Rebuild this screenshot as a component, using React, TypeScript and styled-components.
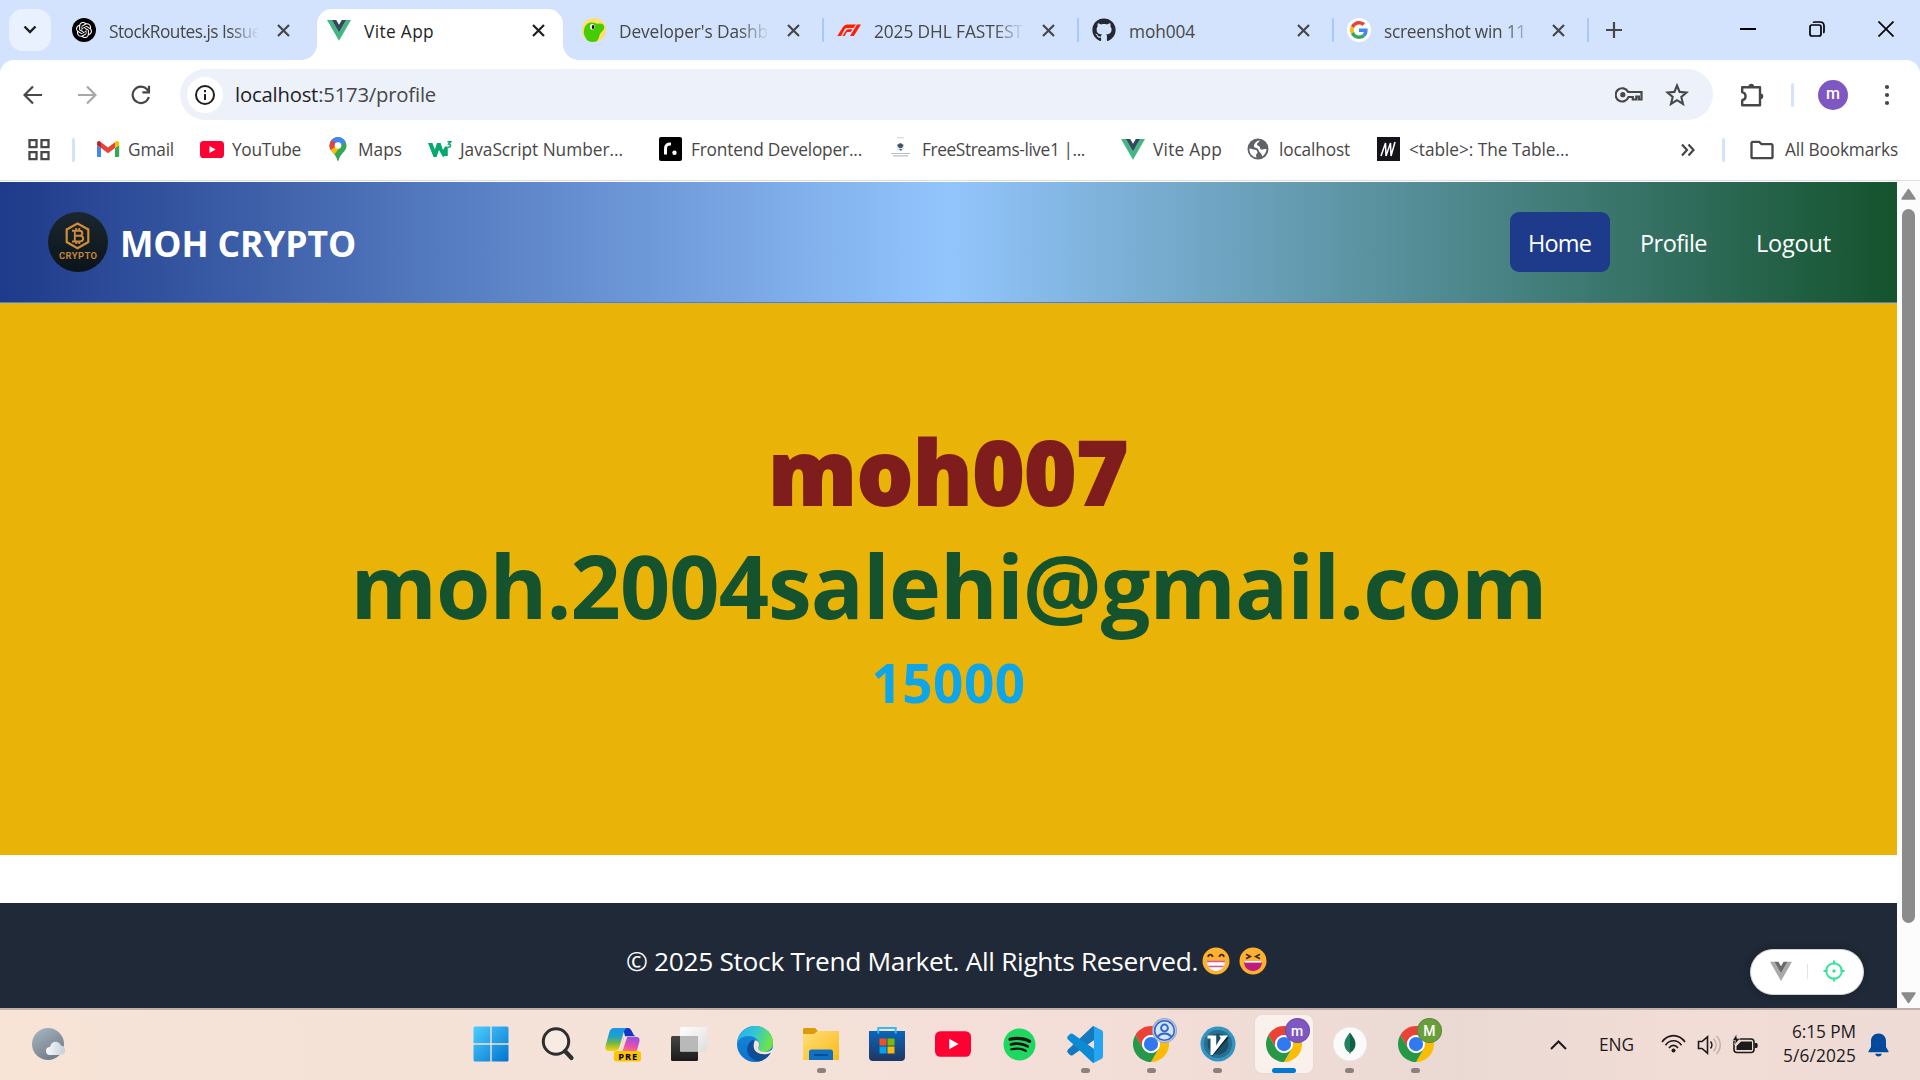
import React, { useLayoutEffect, useRef, useState } from "react";
import styled, { createGlobalStyle } from "styled-components";
import { SiOpenai } from "react-icons/si";
import { FaGithub, FaSpotify } from "react-icons/fa";
import { MdOutlineFolder } from "react-icons/md";

const GlobalStyle = createGlobalStyle`
  * { box-sizing: border-box; }
  html, body { margin: 0; padding: 0; overflow: hidden; }
  body { font-family: "Open Sans", "Noto Sans", sans-serif; background: #fff; }
  svg { display: block; flex: none; }
`;

/* ---------- text ---------- */

const LabelBox = styled.span<{ $w: number; $size: number; $color: string; $weight: number; $shift: number; $bolder: number }>`
  display: block;
  flex: none;
  width: ${(p) => p.$w}px;
  font-size: ${(p) => p.$size}px;
  font-weight: ${(p) => p.$weight};
  color: ${(p) => p.$color};
  -webkit-text-stroke: ${(p) => p.$bolder}px ${(p) => p.$color};
  line-height: 1.3;
  white-space: pre;
  margin-top: ${(p) => p.$shift}px;
`;

interface LabelProps {
  children: string;
  w: number;
  size: number;
  color?: string;
  weight?: number;
  shift?: number;
  bolder?: number;
  rich?: React.ReactNode;
}

/* One line of text whose tracking is adjusted to fill its given width. */
function Label({ children, w, size, color = "#474747", weight = 400, shift = 0, bolder = 0, rich }: LabelProps) {
  const ref = useRef<HTMLSpanElement>(null);
  const [spacing, setSpacing] = useState(0);
  useLayoutEffect(() => {
    const natural = ref.current!.getBoundingClientRect().width;
    setSpacing((w - natural) / children.length);
  }, []);
  return (
    <LabelBox $w={w} $size={size} $color={color} $weight={weight} $shift={shift} $bolder={bolder}>
      <span ref={ref} style={{ letterSpacing: spacing }}>{rich ?? children}</span>
    </LabelBox>
  );
}

/* ---------- shell ---------- */

const Screen = styled.div`
  width: 1920px;
  height: 1080px;
  display: flex;
  flex-direction: column;
  overflow: hidden;
  background: #fff;
`;

/* ---------- tab strip ---------- */

const TabStrip = styled.div`
  height: 60px;
  background: #d3e3fd;
  display: flex;
  align-items: flex-start;
  padding-left: 9px;
`;

const TabSearch = styled.div`
  width: 42px;
  height: 42px;
  margin-top: 9px;
  margin-right: 6px;
  border-radius: 14px;
  background: #e9f1fe;
  display: grid;
  place-items: center;
`;

const TabBox = styled.div<{ $active?: boolean; $sep?: boolean }>`
  width: 255px;
  height: 60px;
  display: flex;
  align-items: center;
  position: relative;
  padding-left: 15px;
  &::before {
    content: "";
    display: ${(p) => (p.$active || p.$sep ? "block" : "none")};
    position: absolute;
    left: ${(p) => (p.$active ? 5 : 0)}px;
    top: ${(p) => (p.$active ? 9 : 18)}px;
    width: ${(p) => (p.$active ? 246 : 2)}px;
    height: ${(p) => (p.$active ? 51 : 24)}px;
    border-radius: ${(p) => (p.$active ? "15px 15px 0 0" : "1px")};
    background: ${(p) => (p.$active ? "#fff" : "#a8c7fa")};
  }
  &::after {
    content: "";
    display: ${(p) => (p.$active ? "block" : "none")};
    position: absolute;
    left: -10px;
    width: 276px;
    bottom: 0;
    height: 15px;
    background:
      radial-gradient(circle at 0 0, transparent 14.5px, #fff 15px) left / 15px 15px no-repeat,
      radial-gradient(circle at 100% 0, transparent 14.5px, #fff 15px) right / 15px 15px no-repeat;
  }
  > * { z-index: 1; }
`;

const Favicon = styled.span`
  width: 24px;
  height: 24px;
  display: grid;
  place-items: center;
  flex: none;
`;

const TabTitle = styled.div<{ $fade?: boolean }>`
  width: 153px;
  margin-left: 13px;
  overflow: hidden;
  -webkit-mask-image: ${(p) => (p.$fade ? "linear-gradient(90deg, #000 120px, transparent 150px)" : "none")};
`;

const TabClose = styled.span`
  width: 24px;
  display: grid;
  place-items: center;
  margin-left: 9px;
`;

const NewTab = styled.div`
  height: 60px;
  width: 49px;
  display: grid;
  place-items: center;
`;

const EndSeparator = styled.div`
  width: 2px;
  height: 24px;
  margin-top: 18px;
  background: #a8c7fa;
`;

const WindowButtons = styled.div`
  margin-left: auto;
  height: 58px;
  display: flex;
  align-items: center;
  > span {
    width: 69px;
    display: grid;
    place-items: center;
  }
`;

/* ---------- toolbar ---------- */

const ToolbarWrap = styled.div`
  height: 60px;
  background: #d3e3fd;
`;

const Toolbar = styled.div`
  height: 60px;
  background: #fff;
  border-radius: 14px 14px 0 0;
  display: flex;
  align-items: center;
  padding: 9px 0 0 6px;
`;

const IconSlot = styled.span<{ $w: number }>`
  width: ${(p) => p.$w}px;
  display: grid;
  place-items: center;
  flex: none;
`;

const Omnibox = styled.div`
  flex: none;
  margin-left: 12px;
  width: 1533px;
  height: 51px;
  border-radius: 26px;
  background: #ecf1fa;
  display: flex;
  align-items: center;
  padding: 0 12px 0 7px;
`;

const SiteInfo = styled.span`
  width: 36px;
  height: 36px;
  border-radius: 50%;
  background: #fff;
  display: grid;
  place-items: center;
  margin-right: 12px;
`;

const Host = styled.span`
  color: #1f1f1f;
`;

const Spacer = styled.span`
  flex: 1;
`;

const BarSeparator = styled.span<{ $l?: number; $r?: number }>`
  width: 3px;
  height: 24px;
  border-radius: 2px;
  background: #d3e3fd;
  margin-left: ${(p) => p.$l ?? 0}px;
  margin-right: ${(p) => p.$r ?? 0}px;
  flex: none;
`;

const Avatar = styled.span`
  flex: none;
  width: 30px;
  height: 30px;
  border-radius: 50%;
  background: #7e57c2;
  color: #fff;
  font: 500 16px/28px Roboto, sans-serif;
  text-align: center;
  margin-right: 36px;
`;

/* ---------- bookmarks ---------- */

const Bookmarks = styled.div`
  height: 62px;
  background: #fff;
  border-bottom: 1px solid #fff;
  box-shadow: inset 0 -1px 0 #dcdde0;
  display: flex;
  align-items: center;
  padding: 0 22px 2px 27px;
`;

const BookmarkItem = styled.div<{ $slot: number }>`
  width: ${(p) => p.$slot}px;
  display: flex;
  align-items: center;
  gap: 8px;
  flex: none;
`;

const BarGap = styled.span`
  width: 9px;
`;

/* ---------- web page ---------- */

const Viewport = styled.div`
  height: 826px;
  display: flex;
`;

const Page = styled.div`
  width: 1897px;
  display: flex;
  flex-direction: column;
`;

const Header = styled.header`
  height: 121px;
  border-bottom: 1px solid #3b82f6;
  background: linear-gradient(90deg, #1e3a8a, #93c5fd, #14532d);
  display: flex;
  align-items: center;
  padding: 0 47px 0 48px;
`;

const Brand = styled.div`
  display: flex;
  align-items: center;
  gap: 12px;
  flex: 1;
`;

const Nav = styled.nav`
  display: flex;
  gap: 12px;
`;

const NavLink = styled.a<{ $active?: boolean }>`
  height: 60px;
  padding: 0 19px 0 18px;
  border-radius: 9px;
  display: flex;
  align-items: center;
  background: ${(p) => (p.$active ? "#1e3a8a" : "transparent")};
`;

const Profile = styled.main`
  height: 552px;
  background: #eab308;
  display: flex;
  flex-direction: column;
  align-items: center;
  padding-top: 111px;
`;

const ProfileLine = styled.div<{ $h: number }>`
  height: ${(p) => p.$h}px;
  display: flex;
  align-items: center;
`;

const Footer = styled.footer`
  margin-top: 48px;
  height: 105px;
  background: #1f2937;
  display: flex;
  align-items: center;
  padding: 11px 0 0 626px;
  position: relative;
`;

const Emoji = styled.span<{ $gap: number }>`
  margin-left: ${(p) => p.$gap}px;
`;

const DevPill = styled.div`
  position: absolute;
  left: 1750px;
  top: 46px;
  width: 114px;
  height: 46px;
  border-radius: 23px;
  background: #fff;
  border: 1px solid #cfd2d6;
  box-shadow: 0 0 8px rgba(0, 0, 0, 0.2);
  display: flex;
  align-items: center;
  justify-content: space-between;
  padding: 0 18px 2px 19px;
`;

const PillDivider = styled.span`
  width: 1px;
  height: 15px;
  background: #e4e4e4;
`;

const Scrollbar = styled.div`
  width: 23px;
  background: #fcfcfc;
  display: flex;
  flex-direction: column;
  align-items: center;
  justify-content: space-between;
  padding: 6px 0 4px;
`;

const Thumb = styled.span`
  width: 13px;
  height: 714px;
  margin-bottom: 60px;
  border-radius: 7px;
  background: #8b8b8b;
`;

/* ---------- taskbar ---------- */

const Taskbar = styled.div`
  height: 72px;
  border-top: 2px solid #bfb0a8;
  background: linear-gradient(90deg, #f7e4d7 0%, #f4e1d8 40%, #f3ded7 60%, #ead9d3 76%, #f2ddd6 88%, #eedbd5 100%);
  display: flex;
  padding-left: 30px;
`;

const Weather = styled.div`
  width: 427.500px;
  padding-top: 17px;
`;

const TaskItem = styled.div<{ $active?: boolean }>`
  width: 58px;
  height: 58px;
  margin: 5px 4.05px 0;
  border-radius: 7px;
  background: ${(p) => (p.$active ? "#faf0ec" : "transparent")};
  box-shadow: ${(p) => (p.$active ? "0 0 0 1px #ead8d1" : "none")};
  display: grid;
  place-items: center;
  position: relative;
  flex: none;
`;

const Running = styled.span<{ $active?: boolean }>`
  position: absolute;
  bottom: 0;
  left: ${(p) => (p.$active ? 17 : 24.5)}px;
  width: ${(p) => (p.$active ? 24 : 9)}px;
  height: 5px;
  border-radius: 3px;
  background: ${(p) => (p.$active ? "#0078d4" : "#8b827d")};
`;

const Badge = styled.span<{ $bg: string }>`
  position: absolute;
  left: 30px;
  top: 3px;
  width: 25px;
  height: 25px;
  border-radius: 50%;
  background: ${(p) => p.$bg};
  box-shadow: inset 0 0 0 1px rgba(60, 50, 80, 0.25);
  color: #fff;
  font: 500 14px/24px Roboto, sans-serif;
  text-align: center;
  display: grid;
  place-items: center;
`;

const Tray = styled.div`
  margin-left: auto;
  display: flex;
  align-items: center;
  padding: 0 31px 0 0;
`;

const TraySlot = styled.span<{ $ml: number; $mt?: number }>`
  margin-left: ${(p) => p.$ml}px;
  margin-top: ${(p) => p.$mt ?? 0}px;
`;

const Clock = styled.div`
  display: flex;
  flex-direction: column;
  align-items: flex-end;
  margin: -2px 0 0 25px;
  gap: 1.500px;
`;

/* ---------- icons ---------- */

const CloseX = ({ c = "#474747", s = 13 }: { c?: string; s?: number }) => (
  <svg width={s} height={s} viewBox="0 0 13 13" stroke={c} strokeWidth="2.2">
    <path d="M1 1L12 12M12 1L1 12" />
  </svg>
);

const Vue = ({ s = 24, a = "#41b883", b = "#35495e" }: { s?: number; a?: string; b?: string }) => (
  <svg width={s} height={s} viewBox="0 0 24 24">
    <path fill={a} d="M0 2h4.8L12 14.4 19.2 2H24L12 22.8z" />
    <path fill={b} d="M4.8 2h4.4L12 6.8 14.8 2h4.4L12 14.4z" />
  </svg>
);

const OpenAi = () => (
  <svg width="24" height="24" viewBox="0 0 24 24">
    <circle cx="12" cy="12" r="12" fill="#000" />
    <g transform="translate(4 4)"><SiOpenai size={16} color="#fff" /></g>
  </svg>
);

const Duck = () => (
  <svg width="24" height="24" viewBox="0 0 24 24">
    <circle cx="12" cy="12" r="12" fill="#ffe066" />
    <path fill="#46cc02" d="M2.500 10C3.500 6 7 4 11 4.500c2 .2 3 1.200 4.500 1.200C19 5 22 6 22.300 9c.2 3-2.500 4.500-4 6.500-1.500 2.500-1 5.500-3.500 7.500-2 1.200-6 1.200-8.500 0C4 21.500 3 19 2 16c-.5-2-.2-4 .5-6z" />
    <ellipse cx="10.300" cy="8.800" rx="2.300" ry="2.800" fill="#fff" />
    <ellipse cx="11" cy="8.900" rx="1.300" ry="2" fill="#111" />
  </svg>
);

const FOne = () => (
  <svg width="24" height="24" viewBox="0 0 24 24" fill="#ff1e00">
    <path d="M.3 18L5 10.500C6.800 7.600 8 6.500 11.500 6.500H19L16.300 10H11c-2 0-2.700.4-3.600 1.800L4 18z" />
    <path d="M5.500 18l3.200-5c.8-1.300 1.500-1.800 3-1.800h4L13.500 14H11c-.9 0-1.200.2-1.700 1L7.600 18z" />
    <path d="M13 18L20 6.500h4L16.800 18z" />
  </svg>
);

const GoogleG = () => (
  <svg width="24" height="24" viewBox="0 0 24 24">
    <circle cx="12" cy="12" r="12" fill="#fff" />
    <g transform="translate(3 3) scale(.375)">
      <path fill="#EA4335" d="M24 9.500c3.540 0 6.710 1.220 9.210 3.600l6.850-6.850C35.900 2.380 30.470 0 24 0 14.620 0 6.510 5.380 2.560 13.220l7.980 6.190C12.430 13.720 17.740 9.500 24 9.500z" />
      <path fill="#4285F4" d="M46.980 24.550c0-1.570-.15-3.090-.38-4.550H24v9.020h12.940c-.58 2.960-2.260 5.480-4.780 7.180l7.730 6c4.510-4.180 7.090-10.360 7.090-17.650z" />
      <path fill="#FBBC05" d="M10.530 28.590c-.48-1.450-.76-2.990-.76-4.590s.27-3.140.76-4.590l-7.980-6.190C.92 16.460 0 20.120 0 24c0 3.880.92 7.540 2.560 10.780l7.970-6.190z" />
      <path fill="#34A853" d="M24 48c6.480 0 11.930-2.130 15.890-5.810l-7.730-6c-2.150 1.450-4.920 2.300-8.160 2.300-6.260 0-11.570-4.220-13.470-9.910l-7.980 6.190C6.510 42.620 14.620 48 24 48z" />
    </g>
  </svg>
);

const Gmail = () => (
  <svg width="24" height="24" viewBox="0 0 24 24">
    <path fill="#4285f4" d="M1 20h4V11L1 8v10.500C1 19.400 1.300 20 2 20z" />
    <path fill="#34a853" d="M19 20h3c.7 0 1.200-.6 1.200-1.500V8L19 11z" />
    <path fill="#fbbc04" d="M19 5.500V11l4.200-3V6.300c0-2.200-2.300-3-3.800-1.700z" />
    <path fill="#ea4335" d="M5 11V5.200l7 5.300 7-5.300V11l-7 5.200z" />
    <path fill="#c5221f" d="M1 6.300V8l4 3V5.200l-.5-.5C3 3.500 1 4.200 1 6.300z" />
  </svg>
);

const YouTube = ({ w = 24, h = 17 }: { w?: number; h?: number }) => (
  <svg width={w} height={h} viewBox="0 0 24 17">
    <rect width="24" height="17" rx="3.600" fill="#ff0033" />
    <path d="M9.500 5v7l6.200-3.500z" fill="#fff" />
  </svg>
);

const Maps = () => (
  <svg width="18" height="24" viewBox="0 0 18 24">
    <clipPath id="pin"><path d="M9 0a8.500 8.500 0 0 1 8.500 8.500c0 4-2.500 6-4.500 8.500-1.800 2.200-2.700 4-3.200 6-.3 1.200-1.300 1.200-1.600 0-.5-2-1.400-3.800-3.200-6C3 14.500.5 12.500.5 8.500A8.500 8.500 0 0 1 9 0z" /></clipPath>
    <g clipPath="url(#pin)">
      <path fill="#34a853" d="M0 0h18v24H0z" />
      <path fill="#fbbc04" d="M0 13L11 0l2 8L4 19z" />
      <path fill="#ea4335" d="M0 0h4l5 8-9 6z" />
      <path fill="#4285f4" d="M2.500 3L9 -1l8 5-6 6z" />
    </g>
    <circle cx="9" cy="8.500" r="3.300" fill="#fff" />
  </svg>
);

const W3 = () => (
  <svg width="24" height="24" viewBox="0 0 24 24">
    <path fill="#04aa6d" d="M0 6h4.400l2.400 6.500L9 6h3.600l2.400 7 2-3.500h2.800v9.500h-3L15 20l-4-7-2.400 7H5.500z" />
    <path fill="none" stroke="#04aa6d" strokeWidth="1.500" d="M19.500 4.800h3.200l-2 2.200c2.800.3 2.400 3.600-.9 3.200" />
  </svg>
);

const Roadmap = () => (
  <svg width="24" height="24" viewBox="0 0 24 24">
    <rect width="23" height="24" rx="2" fill="#000" />
    <path d="M6.500 17.500v-5.500c0-4 2-5.200 5.500-5" stroke="#fff" strokeWidth="3" fill="none" />
    <circle cx="15.500" cy="15.800" r="2.200" fill="#fff" />
  </svg>
);

const Streams = () => (
  <svg width="24" height="24" viewBox="0 0 24 24">
    <path d="M7 .8h7" stroke="#ccd0d5" />
    <circle cx="10.500" cy="10" r="3.800" fill="#e2e6eb" />
    <path d="M7 8l3.500-2 3 2-1.500 3h-3zM9 12h3l-1 2z" fill="#42526b" />
    <path d="M1 16.500h19M3 18.800h15" stroke="#b9bfc8" strokeWidth="1.200" />
  </svg>
);

const Globe = () => (
  <svg width="24" height="24" viewBox="0 0 24 24">
    <circle cx="11" cy="12" r="10.500" fill="#5f6368" />
    <path fill="#fff" d="M2.500 11.500l4 1c2 .3 3.500.5 4 2.500.2 1.500-1.500 2-1.500 3.500l.5 2C5 20 2 16 2.500 11.500zM13 3.500c-1 1.500-2.500 2-3 3.500-.3 1.500 1.500 1.500 2.500 2.500s0 2.500 1.500 3c2 .5 3-1 5.500-.5-.2 3.500-2 6-4.500 7.500 0-2-.5-3-2-4s-1-3-2.500-4-3.500-.5-3.500-2.500S9.500 3.300 13 3.500z" />
  </svg>
);

const Mdn = () => (
  <svg width="24" height="24" viewBox="0 0 24 24">
    <path fill="#15141a" d="M0 0h23v24H0z" />
    <path d="M4 19L8.500 6l.5 13L13.500 6l.5 13M14 19L18 5" fill="none" stroke="#fff" strokeWidth="1.500" />
  </svg>
);

const Grid4 = () => (
  <svg width="24" height="24" viewBox="0 0 24 24" fill="none" stroke="#474747" strokeWidth="2.300">
    <path d="M2.500 2.200h7v7h-7zM14.500 2.200h7v7h-7zM2.500 14.200h7v7h-7zM14.500 14.200h7v7h-7z" />
  </svg>
);

const Arrow = ({ c = "#474747", flip = false }: { c?: string; flip?: boolean }) => (
  <svg width="20" height="20" viewBox="0 0 20 20" fill="none" stroke={c} strokeWidth="2.200">
    <path d={flip ? "M1 10h16.500M10 1.500l8.500 8.500-8.500 8.500" : "M19 10H2.500M10 1.500L1.500 10l8.500 8.500"} />
  </svg>
);

const Reload = () => (
  <svg width="20" height="20" viewBox="0 0 20 20" fill="none" stroke="#474747" strokeWidth="2.200">
    <path d="M17.800 12A8.200 8.200 0 1 1 16 4.300L18 6.800" />
    <path d="M18 .8v6.600h-6.600" />
  </svg>
);

const Info = () => (
  <svg width="22" height="22" viewBox="0 0 22 22" fill="none" stroke="#1f1f1f" strokeWidth="2">
    <circle cx="11" cy="11" r="9" />
    <path d="M11 10v6M11 6v2.200" />
  </svg>
);

const Star = () => (
  <svg width="24" height="24" viewBox="0 0 24 24" fill="none" stroke="#474747" strokeWidth="2.100">
    <path d="M12 2.500l2.600 6.400 7 .6-5.300 4.500 1.700 6.900L12 17.200l-6 3.700 1.700-6.900-5.300-4.500 7-.6z" />
  </svg>
);

const Key = () => (
  <svg width="28" height="20" viewBox="0 0 28 20" fill="none" stroke="#474747" strokeWidth="2.200">
    <path d="M13.200 7H26.500V14.500h-2.600V11.500h-2.600V14.500h-3.500V12h-4.300a6.600 6.600 0 1 1-.300-5z" />
    <circle cx="7.800" cy="9.700" r="2.600" fill="#474747" stroke="none" />
  </svg>
);

const Puzzle = () => (
  <svg width="26" height="26" viewBox="0 0 26 26" fill="none" stroke="#474747" strokeWidth="2.400" strokeLinejoin="round">
    <path d="M3.200 5.200H21v18H3.200v-5c4.500-1 4.500-7 0-8z" />
    <path d="M9.500 4.500a2.800 2.800 0 0 1 5.600 0zM21.500 11.500a2.800 2.800 0 0 1 0 5.600z" fill="#474747" stroke="none" />
  </svg>
);

const Dots = () => (
  <svg width="6" height="22" viewBox="0 0 6 22" fill="#474747">
    <circle cx="3" cy="3" r="2.100" /><circle cx="3" cy="11" r="2.100" /><circle cx="3" cy="19" r="2.100" />
  </svg>
);

const CryptoLogo = () => (
  <svg width="60" height="60" viewBox="0 0 60 60">
    <defs><linearGradient id="coin" x2="0" y2="1"><stop stopColor="#1a272e" /><stop offset="1" stopColor="#0b141a" /></linearGradient></defs>
    <circle cx="30" cy="30" r="30" fill="url(#coin)" />
    <path d="M29.500 11.500L40.300 17.500V30L29.500 36.300 18.700 30V17.500z" fill="none" stroke="#d08c39" strokeWidth="2.200" />
    <path d="M24 18.700h7.500c3.800 0 3.800 5 0 5H27h5c4.200 0 4.200 5.800 0 5.800h-8M26.800 18.700v10.800M28.300 16v2.700M31.300 16v2.700M28.300 29.500v2.500M31.300 29.500v2.500" fill="none" stroke="#d08c39" strokeWidth="1.900" />
    <text x="30" y="46.800" fontFamily="Roboto, sans-serif" fontSize="9.400" fontWeight="700" fill="#c38538" textAnchor="middle" textLength="38">CRYPTO</text>
  </svg>
);

const Face = ({ laugh = false }: { laugh?: boolean }) => (
  <svg width="28" height="28" viewBox="0 0 28 28">
    <circle cx="14" cy="14" r="13.500" fill="#ffb02e" />
    {laugh ? (
      <>
        <path d="M7 7.300l4.300 2.200L7 11.700M21 7.300l-4.300 2.200 4.300 2.200" fill="none" stroke="#402a32" strokeWidth="1.700" />
        <path d="M5 14.500h18c0 6-4 9.500-9 9.500s-9-3.500-9-9.500z" fill="#bb1d80" />
        <path d="M5.500 14h17v1.600h-17z" fill="#fff" />
      </>
    ) : (
      <>
        <path d="M6 10c.5-3.200 4-3.200 4.800 0M17.200 10c.8-3.200 4.300-3.200 4.800 0" fill="none" stroke="#402a32" strokeWidth="1.700" />
        <path d="M5 14.500h18c0 6-4 9.500-9 9.500s-9-3.500-9-9.500z" fill="#fff" />
        <path d="M5 14.500h18M6.500 19.500h15" stroke="#d8539c" strokeWidth="1.300" />
      </>
    )}
  </svg>
);

const Crosshair = () => (
  <svg width="22" height="22" viewBox="0 0 22 22" fill="none" stroke="#34e29b" strokeWidth="1.900">
    <circle cx="11" cy="11" r="7.800" />
    <path d="M11 .5v4M11 17.500v4M.5 11h4M17.500 11h4" />
    <circle cx="11" cy="11" r="1.700" fill="#34e29b" stroke="none" />
  </svg>
);

const WindowsLogo = () => (
  <svg width="36" height="36" viewBox="0 0 36 36">
    <defs><linearGradient id="win" gradientUnits="userSpaceOnUse" x1="0" y1="0" x2="36" y2="36"><stop stopColor="#4fd0ff" /><stop offset="1" stopColor="#0072cf" /></linearGradient></defs>
    <path fill="url(#win)" d="M2 .5h15.300v16.800H.5V2A1.500 1.500 0 0 1 2 .5zM18.700.5H34A1.500 1.500 0 0 1 35.500 2v15.300H18.700zM.5 18.700h16.800v16.800H2A1.500 1.500 0 0 1 .5 34zM18.700 18.700h16.800V34a1.500 1.500 0 0 1-1.500 1.500H18.700z" />
  </svg>
);

const Search = () => (
  <svg width="36" height="36" viewBox="0 0 36 36" fill="none" stroke="#2e2e2e">
    <circle cx="17" cy="15.500" r="12.700" strokeWidth="3" fill="#f8ebe4" />
    <path d="M26 25l6.500 7" strokeWidth="4.200" strokeLinecap="round" />
  </svg>
);

const Copilot = () => (
  <svg width="36" height="36" viewBox="0 0 36 36">
    <defs>
      <linearGradient id="cpA" x2="0" y2="1"><stop stopColor="#1797e8" /><stop offset=".35" stopColor="#1e9fd0" /><stop offset=".65" stopColor="#6cb84a" /><stop offset="1" stopColor="#ffd400" /></linearGradient>
      <linearGradient id="cpB" x1=".6" y1="0" x2=".3" y2="1"><stop stopColor="#9b4fe0" /><stop offset=".5" stopColor="#e94fb0" /><stop offset="1" stopColor="#ff8a5c" /></linearGradient>
    </defs>
    <path fill="#1236c4" d="M18 2h5c4.500 0 4 7.500 8 8.300H20z" />
    <path fill="url(#cpB)" d="M19 11h12.500c3 0 3.500 2.500 2.800 5l-2.500 9c-.8 2.200-2 3-4 3H11c3.500 0 4.700-3.500 5.500-6.500z" />
    <path fill="#f4e1d8" d="M19 11h3.200L17.500 25H13.500c1.500-1 2.300-2 2.800-4z" />
    <path fill="url(#cpA)" d="M9 2h13c-2.800 1-3.500 5-4.600 9l-3 10c-1 3-2.500 4-5 4H4c-3.500 0-4-3-3.200-6L4.200 6.500C5 3.500 6.500 2 9 2z" />
    <rect x="9" y="25" width="27" height="10.500" rx="2.500" fill="#fdc500" />
    <text x="22.800" y="33.500" fontFamily="Open Sans, sans-serif" fontSize="9.300" fontWeight="700" textAnchor="middle" textLength="19">PRE</text>
  </svg>
);

const TaskView = () => (
  <svg width="36" height="36" viewBox="0 0 36 36">
    <defs>
      <linearGradient id="tvD" x2="0" y2="1"><stop stopColor="#454545" /><stop offset="1" stopColor="#1a1a1a" /></linearGradient>
      <linearGradient id="tvL" x2="1" y2="1"><stop stopColor="#fff" /><stop offset="1" stopColor="#dedede" /></linearGradient>
    </defs>
    <rect x="0" y="10" width="27" height="25" rx="1.500" fill="url(#tvD)" />
    <rect x="9" y="1" width="27" height="24.500" rx="1.500" fill="url(#tvL)" />
    <path d="M9 10h18v15.500H9z" fill="#b9b9b9" />
  </svg>
);

const Edge = () => (
  <svg width="36" height="36" viewBox="0 0 36 36">
    <defs>
      <linearGradient id="egA" x2="1" y2=".3"><stop stopColor="#2ba8e8" /><stop offset=".5" stopColor="#31c5d8" /><stop offset="1" stopColor="#6be34d" /></linearGradient>
      <linearGradient id="egB" x2="0" y2="1"><stop stopColor="#168bdc" /><stop offset="1" stopColor="#0a72ce" /></linearGradient>
    </defs>
    <circle cx="18" cy="18" r="18" fill="url(#egB)" />
    <path fill="url(#egA)" d="M.3 16C2 5.500 10 0 18 0c10.500 0 18 7.500 18 16.500 0 6-4.500 9.500-9.500 9.500-4 0-7-1.600-5.500-3.500C25 17 20.500 12.500 15 10.500 9 9 3.500 11 .3 16z" />
    <path fill="#104d95" d="M14.500 14.500c-6 5-6 13 .5 18 2.500 2 5.500 3.300 8 2.600 5-1.600 8.500-4.500 10.700-8.300-7.200 3.500-17 .7-17-6.500 0-1.700.6-3.200 1.500-4.500-.8-1.300-2.200-1.800-3.700-1.300z" />
    <path fill="#f4e1d8" d="M18 14.500c3-.8 5.500 3 3.500 6.500-1.500 3.500 3.500 5.300 8 4.700 2-.2 4.500-1.200 6.700-3.500v4.500l-2.500 0c-7.200 3.500-17 .7-17-6.500 0-2 .3-4.300 1.300-5.700z" />
  </svg>
);

const Folder = () => (
  <svg width="36" height="36" viewBox="0 0 36 36">
    <defs><linearGradient id="fold" x2="1" y2="1"><stop stopColor="#ffdf7a" /><stop offset="1" stopColor="#fbb917" /></linearGradient></defs>
    <path fill="#dd9b0a" d="M0 3.500A1.500 1.500 0 0 1 1.500 2H12l3 3h20v5H0z" />
    <path fill="url(#fold)" d="M0 8h11l3.500-3H36v29H0z" />
    <path fill="#0f71c4" d="M6 34v-8a2.500 2.500 0 0 1 2.500-2.500h19A2.500 2.500 0 0 1 30 26v8z" />
    <path d="M11 29h14" stroke="#064c8c" strokeWidth="1.800" />
  </svg>
);

const Store = () => (
  <svg width="36" height="36" viewBox="0 0 36 36">
    <defs><linearGradient id="shop" x2="0" y2="1"><stop stopColor="#0866bc" /><stop offset="1" stopColor="#213560" /></linearGradient></defs>
    <path d="M0 5h36v26a4 4 0 0 1-4 4H4a4 4 0 0 1-4-4z" fill="url(#shop)" />
    <path d="M9.300 7.500V2H26.700v5.500" fill="none" stroke="#35b9f1" strokeWidth="2" />
    <path fill="#f25022" d="M10.500 12.500h7v7h-7z" /><path fill="#7fba00" d="M18.500 12.500h7v7h-7z" />
    <path fill="#00a4ef" d="M10.500 20.500h7v7h-7z" /><path fill="#ffb900" d="M18.500 20.500h7v7h-7z" />
  </svg>
);

const Code = () => (
  <svg width="36" height="37" viewBox="0 0 36 37">
    <path fill="#1479bd" d="M1 23.500L26 0l4 2v10L6 29c-1 .8-2 .6-3 0l-2-2c-1-1-1-2.500 0-3.500z" />
    <path fill="#0c8ad4" d="M1 13.500L26 37l4-2V25L6 8C5 7.200 4 7.400 3 8l-2 2c-1 1-1 2.500 0 3.500z" />
    <path fill="#25a5f2" d="M26 0l8 3.800c1.300.6 2 1.500 2 3v23.400c0 1.500-.7 2.400-2 3L26 37c.8-.5 1-1.200 1-2.500v-32C27 1.200 26.800.5 26 0z" />
  </svg>
);

const Chrome = () => (
  <svg width="36" height="36" viewBox="0 0 48 48">
    <path fill="#ea4335" d="M24 12h20.780A24 24 0 0 0 3.220 12L13.610 30A12 12 0 0 1 24 12z" />
    <path fill="#fbbc04" d="M34.390 30L24 48A24 24 0 0 0 44.780 12H24A12 12 0 0 1 34.390 30z" />
    <path fill="#279847" d="M13.610 30L3.220 12A24 24 0 0 0 24 48L34.390 30A12 12 0 0 1 13.610 30z" />
    <circle cx="24" cy="24" r="12" fill="#fff" />
    <circle cx="24" cy="24" r="9.500" fill="#3079ee" />
  </svg>
);

const VApp = () => (
  <svg width="36" height="36" viewBox="0 0 36 36">
    <circle cx="18" cy="18" r="17.500" fill="#3194c2" />
    <circle cx="18" cy="18" r="14" fill="#27708f" />
    <circle cx="18" cy="18" r="10.500" fill="#1b4f69" />
    <path fill="#10222c" d="M12 30.500L28.500 12l-2-2-13 16z" />
    <path fill="#fff" d="M7.500 9.500h8.700v10l4.500-7.500-1.500-2.500H28L12.500 29h-2V12.500h-3z" />
  </svg>
);

const Mongo = () => (
  <svg width="36" height="36" viewBox="0 0 36 36">
    <circle cx="18" cy="18" r="17" fill="#fafafa" stroke="#e7dcd7" strokeWidth=".7" />
    <path fill="#116149" d="M18 6.500c3 4.500 5.500 7 5.500 11.500 0 4-2 6.500-5 8.500l-.5 2-.6-2c-3-2-4.900-4.500-4.900-8.500C12.500 13.500 15 11 18 6.500z" />
    <path fill="#3fa37c" d="M18 7v20.500l-.6-1c-3-2-4.900-4.500-4.900-8.500 0-4.500 2.500-7 5.500-11z" opacity=".45" />
  </svg>
);

const Person = () => (
  <svg width="25" height="25" viewBox="0 0 25 25">
    <circle cx="12.500" cy="12.500" r="9.800" fill="#d5e3fb" stroke="#3269c9" strokeWidth="1.600" />
    <circle cx="12.500" cy="10" r="3.400" fill="none" stroke="#3269c9" strokeWidth="2" />
    <path d="M5.800 18.500c3.500-4 10-4 13.400 0" fill="none" stroke="#3269c9" strokeWidth="2" />
  </svg>
);

const Moon = () => (
  <svg width="38" height="36" viewBox="0 0 38 36">
    <defs>
      <linearGradient id="moon" x2=".6" y2="1"><stop stopColor="#a9b8c4" /><stop offset="1" stopColor="#727d88" /></linearGradient>
      <linearGradient id="cloud" x2="1"><stop stopColor="#f7fafd" /><stop offset="1" stopColor="#c6ced8" /></linearGradient>
    </defs>
    <circle cx="18" cy="17" r="16" fill="url(#moon)" />
    <path fill="url(#cloud)" d="M20 28a4 4 0 0 1 0-8c1-6.500 9-7 11-1.500a4.800 4.800 0 0 1 0 9.500z" />
  </svg>
);

const Wifi = () => (
  <svg width="25" height="20" viewBox="0 0 25 20" fill="none" stroke="#1b1b1b" strokeWidth="1.600">
    <path d="M1 8C7-.5 18-.5 24 8M4.500 11.200c4-6 12-6 16 0M8 14c2.500-3.500 6.500-3.500 9 0" />
    <circle cx="12.500" cy="16.500" r="2" fill="#1b1b1b" stroke="none" />
  </svg>
);

const Volume = () => (
  <svg width="25" height="20" viewBox="0 0 25 20" fill="none" stroke="#1b1b1b" strokeWidth="1.600">
    <path d="M1.500 6.500H5L10.500 1.800v16.400L5 13.500H1.500z" />
    <path d="M13.500 6.500c1.800 2 1.800 5 0 7" />
    <path d="M16.500 3.500c3.500 4 3.500 9 0 13M19.500 1c5 5.500 5 12.500 0 18" stroke="#c3b2ac" />
  </svg>
);

const Battery = () => (
  <svg width="26" height="20" viewBox="0 0 26 20">
    <rect x="2" y="5" width="20" height="13.500" rx="3" fill="none" stroke="#1b1b1b" strokeWidth="1.600" />
    <path fill="#1b1b1b" d="M9 7.500h11v8.500H4.500v-4zM22.500 9h1.800c1 0 1.400.8 1.400 2.500s-.4 2.500-1.400 2.500h-1.800z" />
    <path d="M4.500 0l-4 6.500h3L2.500 11 8 4.500H5z" fill="#1b1b1b" stroke="#f1dcd6" strokeWidth=".6" />
  </svg>
);

const Bell = () => (
  <svg width="21" height="24" viewBox="0 0 21 24" fill="#044a9c">
    <path d="M10.500.5c4.500 0 7.500 3.200 7.500 7.500v6l2.500 4.200c.3.500 0 1-.6 1H1.100c-.6 0-.9-.5-.6-1L3 14V8C3 3.700 6 .5 10.500.5zM7 20.800h7c-.5 1.600-1.700 2.600-3.500 2.600S7.500 22.400 7 20.800z" />
  </svg>
);

const tabs = [
  { title: "StockRoutes.js Issue", w: 152, icon: <OpenAi />, fade: true },
  { title: "Vite App", w: 70, icon: <Vue />, active: true },
  { title: "Developer's Dashb", w: 149, icon: <Duck />, fade: true },
  { title: "2025 DHL FASTEST", w: 149, icon: <FOne />, fade: true, sep: true },
  { title: "moh004", w: 66, icon: <FaGithub size={24} color="#24292f" />, sep: true },
  { title: "screenshot win 11", w: 142, icon: <GoogleG />, fade: true, sep: true },
];

const bookmarks = [
  { title: "Gmail", w: 46, slot: 104, icon: <Gmail /> },
  { title: "YouTube", w: 69, slot: 126, icon: <YouTube /> },
  { title: "Maps", w: 44, slot: 102, icon: <Maps /> },
  { title: "JavaScript Number...", w: 163, slot: 231, icon: <W3 /> },
  { title: "Frontend Developer...", w: 171, slot: 231, icon: <Roadmap /> },
  { title: "FreeStreams-live1 |...", w: 163, slot: 231, icon: <Streams /> },
  { title: "Vite App", w: 69, slot: 126, icon: <Vue /> },
  { title: "localhost", w: 71, slot: 130, icon: <Globe /> },
  { title: "<table>: The Table...", w: 160, slot: 198, icon: <Mdn /> },
];

const apps = [
  { icon: <WindowsLogo /> },
  { icon: <Search /> },
  { icon: <Copilot /> },
  { icon: <TaskView /> },
  { icon: <Edge /> },
  { icon: <Folder />, run: true },
  { icon: <Store /> },
  { icon: <YouTube w={36} h={26} /> },
  { icon: <FaSpotify size={33} color="#1ed760" style={{ background: "radial-gradient(#191414 60%, transparent 62%)" }} /> },
  { icon: <Code />, run: true },
  { icon: <Chrome />, run: true, badge: <Person />, bg: "#b9cbec" },
  { icon: <VApp />, run: true },
  { icon: <Chrome />, run: true, active: true, badge: "m", bg: "#7e57c2" },
  { icon: <Mongo />, run: true },
  { icon: <Chrome />, run: true, badge: "M", bg: "#689f38" },
];

export default function App() {
  return (
    <Screen>
      <GlobalStyle />
      <TabStrip>
        <TabSearch>
          <svg width="14" height="10" viewBox="0 0 14 10" fill="none" stroke="#1f1f1f" strokeWidth="2.400"><path d="M1.500 1.500L7 7l5.500-5.500" /></svg>
        </TabSearch>
        {tabs.map((t) => (
          <TabBox key={t.title} $active={t.active} $sep={t.sep}>
            <Favicon>{t.icon}</Favicon>
            <TabTitle $fade={t.fade}>
              <Label w={t.w} size={17.300} color={t.active ? "#1f1f1f" : "#474747"} shift={4}>{t.title}</Label>
            </TabTitle>
            <TabClose><CloseX c={t.active ? "#1f1f1f" : "#474747"} /></TabClose>
          </TabBox>
        ))}
        <EndSeparator />
        <NewTab>
          <svg width="16" height="16" viewBox="0 0 16 16" stroke="#474747" strokeWidth="2.200"><path d="M8 0v16M0 8h16" /></svg>
        </NewTab>
        <WindowButtons>
          <span><svg width="16" height="2"><path d="M0 1h16" stroke="#000" strokeWidth="2" /></svg></span>
          <span>
            <svg width="16" height="16" viewBox="0 0 16 16" fill="none" stroke="#000" strokeWidth="1.700">
              <rect x="1" y="4" width="11" height="11" rx="2" />
              <path d="M4 1.500C4.500 1 5 1 6 1h5c2.500 0 4 1.500 4 4v5c0 1 0 1.500-.6 2" />
            </svg>
          </span>
          <span><svg width="16" height="16" viewBox="0 0 16 16" stroke="#000" strokeWidth="1.700"><path d="M.5.500l15 15M15.500.500l-15 15" /></svg></span>
        </WindowButtons>
      </TabStrip>

      <ToolbarWrap>
        <Toolbar>
          <IconSlot $w={54}><Arrow /></IconSlot>
          <IconSlot $w={54}><Arrow c="#a8a8a8" flip /></IconSlot>
          <IconSlot $w={54}><Reload /></IconSlot>
          <Omnibox>
            <SiteInfo><Info /></SiteInfo>
            <Label w={201} size={20.300} shift={-1} rich={<><Host>localhost</Host>:5173/profile</>}>localhost:5173/profile</Label>
            <Spacer />
            <IconSlot $w={48}><Key /></IconSlot>
            <IconSlot $w={48}><Star /></IconSlot>
          </Omnibox>
          <IconSlot $w={78}><Puzzle /></IconSlot>
          <BarSeparator $r={24} />
          <Avatar>m</Avatar>
          <Dots />
        </Toolbar>
      </ToolbarWrap>

      <Bookmarks>
        <Grid4 />
        <BarSeparator $l={21} $r={21} />
        {bookmarks.map((b) => (
          <BookmarkItem key={b.title} $slot={b.slot}>
            <Favicon>{b.icon}</Favicon>
            <Label w={b.w} size={17.300} shift={2}>{b.title}</Label>
          </BookmarkItem>
        ))}
        <Spacer />
        <svg width="14" height="14" viewBox="0 0 14 14" fill="none" stroke="#474747" strokeWidth="2.200"><path d="M1 1.500L6 7l-5 5.500M7.500 1.500l5 5.500-5 5.500" /></svg>
        <BarSeparator $l={27} $r={23} />
        <MdOutlineFolder size={28} color="#474747" />
        <BarGap />
        <Label w={113} size={17.300} shift={2}>All Bookmarks</Label>
      </Bookmarks>

      <Viewport>
        <Page>
          <Header>
            <Brand>
              <CryptoLogo />
              <Label w={236} size={35.500} weight={700} color="#fff" shift={3}>MOH CRYPTO</Label>
            </Brand>
            <Nav>
              <NavLink $active><Label w={63} size={23.500} color="#fff" shift={3}>Home</Label></NavLink>
              <NavLink><Label w={67} size={23.500} color="#fff" shift={3}>Profile</Label></NavLink>
              <NavLink><Label w={75} size={23.500} color="#fff" shift={3}>Logout</Label></NavLink>
            </Nav>
          </Header>
          <Profile>
            <ProfileLine $h={114}><Label w={360} size={88} weight={800} bolder={2} color="#7f1d1d">moh007</Label></ProfileLine>
            <ProfileLine $h={114}><Label w={1196} size={88} weight={700} shift={1} color="#14532d">moh.2004salehi@gmail.com</Label></ProfileLine>
            <ProfileLine $h={80}><Label w={154} size={53} weight={700} shift={3} color="#0ea5e9">15000</Label></ProfileLine>
          </Profile>
          <Footer>
            <Label w={572} size={26.300} color="#fff" shift={1}>© 2025 Stock Trend Market. All Rights Reserved.</Label>
            <Emoji $gap={4}><Face /></Emoji>
            <Emoji $gap={9}><Face laugh /></Emoji>
            <DevPill>
              <Vue s={22} a="#a9a9a9" b="#6b6b6b" />
              <PillDivider />
              <Crosshair />
            </DevPill>
          </Footer>
        </Page>
        <Scrollbar>
          <svg width="15" height="12" viewBox="0 0 15 12"><path d="M7.500 1.500L14 11H1z" fill="#8b8b8b" stroke="#8b8b8b" strokeWidth="1.500" strokeLinejoin="round" /></svg>
          <Thumb />
          <svg width="15" height="12" viewBox="0 0 15 12"><path d="M7.500 10.500L14 1H1z" fill="#8b8b8b" stroke="#8b8b8b" strokeWidth="1.500" strokeLinejoin="round" /></svg>
        </Scrollbar>
      </Viewport>

      <Taskbar>
        <Weather><Moon /></Weather>
        {apps.map((a, i) => (
          <TaskItem key={i} $active={a.active}>
            {a.icon}
            {a.badge && <Badge $bg={a.bg!}>{a.badge}</Badge>}
            {a.run && <Running $active={a.active} />}
          </TaskItem>
        ))}
        <Tray>
          <svg width="17" height="10" viewBox="0 0 17 10" fill="none" stroke="#1b1b1b" strokeWidth="2"><path d="M1 9l7.500-7.500L16 9" /></svg>
          <TraySlot $ml={32}><Label w={35} size={17.300} color="#1b1b1b">ENG</Label></TraySlot>
          <TraySlot $ml={27} $mt={-3}><Wifi /></TraySlot>
          <TraySlot $ml={11}><Volume /></TraySlot>
          <TraySlot $ml={10} $mt={-3}><Battery /></TraySlot>
          <Clock>
            <Label w={64} size={17.300} color="#1b1b1b">6:15 PM</Label>
            <Label w={73} size={17.300} color="#1b1b1b">5/6/2025</Label>
          </Clock>
          <TraySlot $ml={12}><Bell /></TraySlot>
        </Tray>
      </Taskbar>
    </Screen>
  );
}
